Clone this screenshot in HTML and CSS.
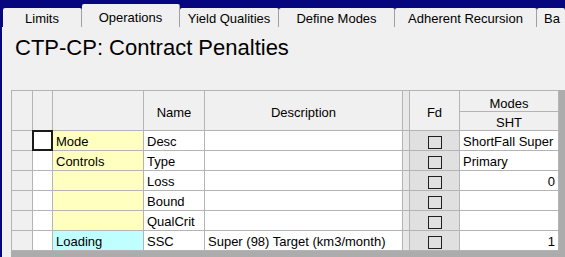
FILE: index.html
```html
<!DOCTYPE html>
<html lang="en">
<head>
  <meta charset="UTF-8">
  <title>CTP-CP: Contract Penalties</title>
  <link rel="stylesheet" href="styles.css">
</head>
<body>
  <div class="tabs">
    <div class="tab" style="width: 79px">Limits</div>
    <div class="tab active" style="width: 98px">Operations</div>
    <div class="tab" style="width: 99px">Yield Qualities</div>
    <div class="tab" style="width: 116px">Define Modes</div>
    <div class="tab" style="width: 142px">Adherent Recursion</div>
    <div class="tab last" style="width: 28px">Ba</div>
  </div>

  <div class="panel">
    <h1>CTP-CP: Contract Penalties</h1>

    <div class="grid-area">
      <div class="grid">
        <!-- header -->
        <div class="hd span"></div>
        <div class="hd span"></div>
        <div class="hd span"></div>
        <div class="hd span">Name</div>
        <div class="hd span">Description</div>
        <div class="hd span gap"></div>
        <div class="hd span">Fd</div>
        <div class="hd">Modes</div>
        <div class="hd sub">SHT</div>

        <!-- rows -->
        <div class="rh"></div>
        <div class="c focus"></div>
        <div class="c y">Mode</div>
        <div class="c">Desc</div>
        <div class="c"></div>
        <div class="gap"></div>
        <div class="fd"><span class="box"></span></div>
        <div class="c">ShortFall Super</div>

        <div class="rh"></div>
        <div class="c"></div>
        <div class="c y">Controls</div>
        <div class="c">Type</div>
        <div class="c"></div>
        <div class="gap"></div>
        <div class="fd"><span class="box"></span></div>
        <div class="c">Primary</div>

        <div class="rh"></div>
        <div class="c"></div>
        <div class="c y"></div>
        <div class="c">Loss</div>
        <div class="c"></div>
        <div class="gap"></div>
        <div class="fd"><span class="box"></span></div>
        <div class="c num">0</div>

        <div class="rh"></div>
        <div class="c"></div>
        <div class="c y"></div>
        <div class="c">Bound</div>
        <div class="c"></div>
        <div class="gap"></div>
        <div class="fd"><span class="box"></span></div>
        <div class="c"></div>

        <div class="rh"></div>
        <div class="c"></div>
        <div class="c y"></div>
        <div class="c">QualCrit</div>
        <div class="c"></div>
        <div class="gap"></div>
        <div class="fd"><span class="box"></span></div>
        <div class="c"></div>

        <div class="rh"></div>
        <div class="c"></div>
        <div class="c cy">Loading</div>
        <div class="c">SSC</div>
        <div class="c">Super (98) Target (km3/month)</div>
        <div class="gap"></div>
        <div class="fd"><span class="box"></span></div>
        <div class="c num">1</div>
      </div>
    </div>
  </div>
</body>
</html>
```

FILE: styles.css
```css
* { box-sizing: border-box; }

body {
  margin: 0;
  height: 257px;
  overflow: hidden;
  background: #06067e;
  font: 13px "Liberation Sans", Arial, sans-serif;
  color: #000;
}

.tabs {
  display: flex;
  align-items: flex-end;
  height: 27px;
  padding-left: 3px;
}

.tab {
  flex: none;
  height: 19px;
  line-height: 21px;
  text-align: center;
  white-space: nowrap;
  overflow: hidden;
  background: #f0f0f0;
  border-right: 1px solid #a0a0a0;
  border-radius: 2px 2px 0 0;
}

.tab.active {
  height: 23px;
  padding-top: 3px;
}

.tab.last {
  text-align: left;
  padding-left: 7px;
  border-right: none;
}

.panel {
  display: flex;
  flex-direction: column;
  height: 230px;
  margin-left: 2px;
  background: #f0f0f0;
}

h1 {
  margin: 10px 0 0 13px;
  font-size: 22px;
  font-weight: normal;
  line-height: 22px;
}

.grid-area {
  flex: 1;
  margin: 31px 0 0 9px;
  background: #acacac;
}

.grid {
  display: grid;
  width: max-content;
  grid-template-columns: 20px 19px 90px 60px 197px 6px 49px 98px;
  grid-template-rows: 20px 18px repeat(6, 19px);
  gap: 1px;
  padding: 1px;
  background: #b4b4b4;
}

.hd {
  display: flex;
  align-items: center;
  justify-content: center;
  padding-top: 4px;
  background: #f0f0f0;
}

.hd.span { grid-row: span 2; }
.hd.sub { padding-top: 3px; }

.c {
  padding: 0 3px;
  line-height: 21px;
  white-space: nowrap;
  overflow: hidden;
  background: #fff;
}

.rh { background: #f0f0f0; }
.y { background: #ffffc0; }
.cy { background: #c0ffff; }
.gap { background: #e8e8e8; }
.num { text-align: right; }

.focus {
  position: relative;
  z-index: 1;
  box-shadow: 0 0 0 1px #1a1a1a, inset 0 0 0 1px #1a1a1a;
}

.fd { background: #e0e0e0; }

.box {
  display: block;
  width: 14px;
  height: 13px;
  margin: 5px auto 0;
  border: 1px solid #202020;
}
```
